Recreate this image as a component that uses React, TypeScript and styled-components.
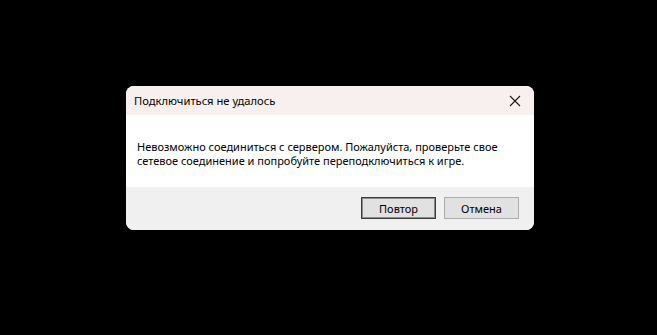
import React from "react";
import styled, { createGlobalStyle } from "styled-components";

const Global = createGlobalStyle`
  html, body { margin: 0; padding: 0; background: #000; }
  body { font-family: "Noto Sans", "Open Sans", sans-serif; }
`;

const Screen = styled.div`
  width: 657px;
  height: 335px;
  background: #000;
  padding: 86px 0 0 126px;
  box-sizing: border-box;
`;

const Dialog = styled.div`
  width: 408px;
  height: 144px;
  border-radius: 8px;
  overflow: hidden;
  display: flex;
  flex-direction: column;
  background: #fff;
`;

const TitleBar = styled.div`
  height: 29px;
  background: #f8f0ef;
  display: flex;
  align-items: center;
  justify-content: space-between;
  padding: 0 9px 0 8px;
  font-size: 11.2px;
  color: #000;
`;

const CloseButton = styled.div`
  width: 20px;
  height: 20px;
  display: flex;
  align-items: center;
  justify-content: center;
`;

const Body = styled.div`
  height: 72px;
  box-sizing: border-box;
  padding: 25px 0 0 11px;
  font-size: 11px;
  line-height: 14px;
  color: #000;
`;

const Line = styled.div`
  white-space: nowrap;
`;

const Footer = styled.div`
  flex: 1;
  background: #f0f0f0;
  display: flex;
  justify-content: flex-end;
  align-items: flex-start;
  gap: 8px;
  padding: 10px 15px 0 0;
`;

const Button = styled.div<{ $primary?: boolean }>`
  width: 75px;
  height: 22px;
  box-sizing: border-box;
  background: #e1e1e1;
  border: 1px solid ${(p) => (p.$primary ? "#3c3c3c" : "#adadad")};
  box-shadow: ${(p) => (p.$primary ? "inset 0 0 0 1px #8a8a8a" : "none")};
  display: flex;
  align-items: center;
  justify-content: center;
  font-size: 11px;
  color: #000;
`;

export default function App() {
  return (
    <>
      <Global />
      <Screen>
        <Dialog>
          <TitleBar>
            <span>Подключиться не удалось</span>
            <CloseButton>
              <svg width="12" height="12" viewBox="0 0 12 12">
                <path d="M1 1 L11 11 M11 1 L1 11" stroke="#1a1a1a" strokeWidth="1.1" fill="none" />
              </svg>
            </CloseButton>
          </TitleBar>
          <Body>
            <Line>Невозможно соединиться с сервером. Пожалуйста, проверьте свое</Line>
            <Line>сетевое соединение и попробуйте переподключиться к игре.</Line>
          </Body>
          <Footer>
            <Button $primary>Повтор</Button>
            <Button>Отмена</Button>
          </Footer>
        </Dialog>
      </Screen>
    </>
  );
}
